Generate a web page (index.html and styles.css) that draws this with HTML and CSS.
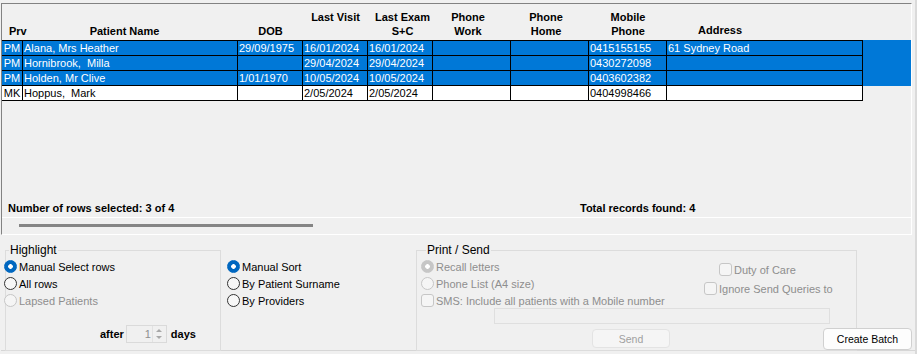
FILE: index.html
```html
<!DOCTYPE html>
<html>
	<head>
		<meta charset="utf-8">
		<title>Recall List</title>
		<link rel="stylesheet" href="styles.css">
	</head>
	<body>
		<div class="window">
			<div class="results">
				<div class="grid">
					<div class="row head">
						<div class="hc prv">Prv</div>
						<div class="hc name">Patient Name</div>
						<div class="hc">DOB</div>
						<div class="hc">Last Visit<br>&nbsp;</div>
						<div class="hc le">Last Exam<br>S+C</div>
						<div class="hc ph">Phone<br>Work</div>
						<div class="hc ph">Phone<br>Home</div>
						<div class="hc">Mobile<br>Phone</div>
						<div class="hc addr">Address</div>
						<div></div>
					</div>
					<div class="row first sel">
						<div class="cell prv">PM</div>
						<div class="cell">Alana, Mrs Heather</div>
						<div class="cell">29/09/1975</div>
						<div class="cell">16/01/2024</div>
						<div class="cell">16/01/2024</div>
						<div class="cell"></div>
						<div class="cell"></div>
						<div class="cell">0415155155</div>
						<div class="cell">61 Sydney Road</div>
						<div class="fill"></div>
					</div>
					<div class="row sel">
						<div class="cell prv">PM</div>
						<div class="cell">Hornibrook,&nbsp; Milla</div>
						<div class="cell"></div>
						<div class="cell">29/04/2024</div>
						<div class="cell">29/04/2024</div>
						<div class="cell"></div>
						<div class="cell"></div>
						<div class="cell">0430272098</div>
						<div class="cell"></div>
						<div class="fill"></div>
					</div>
					<div class="row sel">
						<div class="cell prv">PM</div>
						<div class="cell">Holden, Mr Clive</div>
						<div class="cell">1/01/1970</div>
						<div class="cell">10/05/2024</div>
						<div class="cell">10/05/2024</div>
						<div class="cell"></div>
						<div class="cell"></div>
						<div class="cell">0403602382</div>
						<div class="cell"></div>
						<div class="fill"></div>
					</div>
					<div class="row">
						<div class="cell prv">MK</div>
						<div class="cell">Hoppus,&nbsp; Mark</div>
						<div class="cell"></div>
						<div class="cell">2/05/2024</div>
						<div class="cell">2/05/2024</div>
						<div class="cell"></div>
						<div class="cell"></div>
						<div class="cell">0404998466</div>
						<div class="cell"></div>
						<div class="fill"></div>
					</div>
				</div>
				<div class="summary">
					<span class="count">Number of rows selected: 3 of 4</span>
					<span>Total records found: 4</span>
				</div>
				<div class="hscroll"><div class="thumb"></div></div>
			</div>

			<div class="options">
				<fieldset class="group highlight">
					<legend>Highlight</legend>
					<label class="opt on"><i class="radio"></i>Manual Select rows</label>
					<label class="opt"><i class="radio"></i>All rows</label>
					<label class="opt off"><i class="radio"></i>Lapsed Patients</label>
					<div class="after">
						<b>after</b>
						<span class="spin">
							<span class="spin-val">1</span>
							<span class="spin-btns">
								<svg width="12" height="8" viewBox="0 0 12 8"><path d="M3 6 L6 3 L9 6 Z" fill="#a8a8a8"/></svg>
								<svg width="12" height="8" viewBox="0 0 12 8"><path d="M3 2 L6 5 L9 2 Z" fill="#a8a8a8"/></svg>
							</span>
						</span>
						<b>days</b>
					</div>
				</fieldset>

				<div class="sort">
					<label class="opt on"><i class="radio"></i>Manual Sort</label>
					<label class="opt"><i class="radio"></i>By Patient Surname</label>
					<label class="opt"><i class="radio"></i>By Providers</label>
				</div>

				<fieldset class="group print">
					<legend>Print / Send</legend>
					<div class="print-cols">
						<div class="print-left">
							<label class="opt off on"><i class="radio"></i>Recall letters</label>
							<label class="opt off"><i class="radio"></i>Phone List (A4 size)</label>
							<label class="opt off"><i class="check"></i>SMS: Include all patients with a Mobile number</label>
						</div>
						<div class="print-right">
							<label class="opt off duty"><i class="check"></i>Duty of Care</label>
							<label class="opt off"><i class="check"></i>Ignore Send Queries to</label>
						</div>
					</div>
					<div class="sms-box"></div>
					<button class="btn send" disabled>Send</button>
				</fieldset>

				<button class="btn batch">Create Batch</button>
			</div>
		</div>
	</body>
</html>
```

FILE: styles.css
```css
body{
	margin: 0;
	background: #f0f0f0;
	font-family: "Liberation Sans", Arial, sans-serif;
	font-size: 11px;
	color: #000;
}
.window{
	width: 917px;
	height: 354px;
	padding: 3px 0 0 1px;
	box-sizing: border-box;
	border-right: 2px solid #dadada;
	overflow: hidden;
}

/* results grid */
.results{
	width: 911px;
	height: 232px;
	box-sizing: border-box;
	border-top: 1px solid #828282;
	border-left: 1px solid #828282;
	border-right: 1px solid #fff;
	border-bottom: 1px solid #fff;
	display: flex;
	flex-direction: column;
}
.grid{
	flex: 1;
}
.row{
	display: grid;
	grid-template-columns: 21px 215px 65px 65px 65px 78px 78px 78px 196px 1fr;
}
.head{
	height: 36px;
	align-items: end;
	font-weight: bold;
}
.hc{
	text-align: center;
	line-height: 14px;
	padding-bottom: 2px;
	white-space: nowrap;
}
.hc.prv{
	text-align: left;
	padding-left: 7px;
}
.hc.name{
	padding-right: 12px;
}
.hc.le{
	padding-left: 4px;
}
.hc.ph{
	padding-right: 8px;
}
.hc.addr{
	text-align: left;
	padding-left: 31px;
	padding-bottom: 3px;
}
.cell{
	height: 15px;
	box-sizing: border-box;
	border-right: 1px solid #000;
	border-bottom: 1px solid #000;
	line-height: 14px;
	padding-left: 1px;
	white-space: nowrap;
	overflow: hidden;
	background: #fff;
}
.cell.prv{
	padding: 0;
	text-align: center;
}
.first .cell{
	height: 16px;
	border-top: 1px solid #000;
}
.sel .cell, .sel .fill{
	background: #0078d7;
	color: #fff;
}
.summary{
	height: 16px;
	line-height: 14px;
	font-weight: bold;
	padding-left: 6px;
	display: flex;
}
.summary .count{
	width: 572px;
}
.hscroll{
	height: 16px;
	border-top: 1px solid #fff;
}
.thumb{
	margin: 6px 0 0 17px;
	width: 294px;
	height: 3px;
	background: #858585;
}

/* option panels */
.options{
	height: 116px;
	box-sizing: border-box;
	border-bottom: 1px solid #d6d6d6;
	display: flex;
	position: relative;
}
.group{
	margin: 8px 0 0 0;
	padding: 1px 0 0 0;
	height: 108px;
	box-sizing: border-box;
	border: 1px solid #dcdcdc;
	min-width: 0;
}
.group legend{
	font-size: 12px;
	line-height: 14px;
	padding: 0 1px;
}
.highlight{
	margin-left: 4px;
	width: 216px;
}
.highlight legend{
	margin-left: 3px;
}
.highlight .opt{
	margin-left: -2px;
}
.sort{
	width: 195px;
	padding: 23px 0 0 6px;
	box-sizing: border-box;
}
.print{
	width: 441px;
}
.print legend{
	margin-left: 9px;
}

.opt{
	display: flex;
	align-items: center;
	height: 17px;
	white-space: nowrap;
}
.opt i{
	flex: none;
	width: 13px;
	height: 13px;
	box-sizing: border-box;
	margin-right: 2px;
}
.radio{
	border-radius: 50%;
	border: 1px solid #333;
	background: #f7f7f7;
}
.on .radio{
	border-color: #0067c0;
	background: radial-gradient(circle, #fff 0 2px, #0067c0 2.6px);
}
.off{
	color: #8e8e8e;
}
.off .radio{
	border-color: #c6c6c6;
	background: #f5f5f5;
}
.off.on .radio{
	background: radial-gradient(circle, #fff 0 2px, #c6c6c6 2.6px);
}
.check{
	border-radius: 3px;
	border: 1px solid #c6c6c6;
	background: #f5f5f5;
}

.after{
	display: flex;
	align-items: center;
	margin: 16px 0 0 94px;
	height: 18px;
}
.after b{
	font-weight: bold;
}
.spin{
	display: flex;
	width: 41px;
	height: 18px;
	box-sizing: border-box;
	border: 1px solid #dadada;
	margin: 0 4px 0 2px;
	background: #f0f0f0;
}
.spin-val{
	width: 24px;
	text-align: right;
	line-height: 16px;
	color: #8e8e8e;
}
.spin-btns{
	margin-left: 1px;
	display: flex;
	flex-direction: column;
	border-left: 1px solid #e2e2e2;
}
.spin-btns svg{
	display: block;
}

.print-cols{
	display: flex;
}
.print-left{
	width: 283px;
	padding-left: 4px;
}
.print-right{
	padding-top: 3px;
	display: flex;
	flex-direction: column;
	gap: 2px;
}
.print-right .duty{
	margin-left: 15px;
}
.sms-box{
	margin: -1px 0 0 77px;
	width: 336px;
	height: 16px;
	box-sizing: border-box;
	border: 1px solid #dfdfdf;
}
.btn{
	font-family: "Liberation Sans", Arial, sans-serif;
	font-size: 10.5px;
	border-radius: 4px;
	padding: 0;
}
.send{
	display: block;
	margin: 5px 0 0 175px;
	width: 78px;
	height: 19px;
	border: 1px solid #e3e3e3;
	background: #f5f5f5;
	color: #a0a0a0;
}
.batch{
	position: absolute;
	right: 3px;
	bottom: 0;
	width: 89px;
	height: 22px;
	border: 1px solid #d0d0d0;
	background: #fdfdfd;
	color: #000;
}
```
